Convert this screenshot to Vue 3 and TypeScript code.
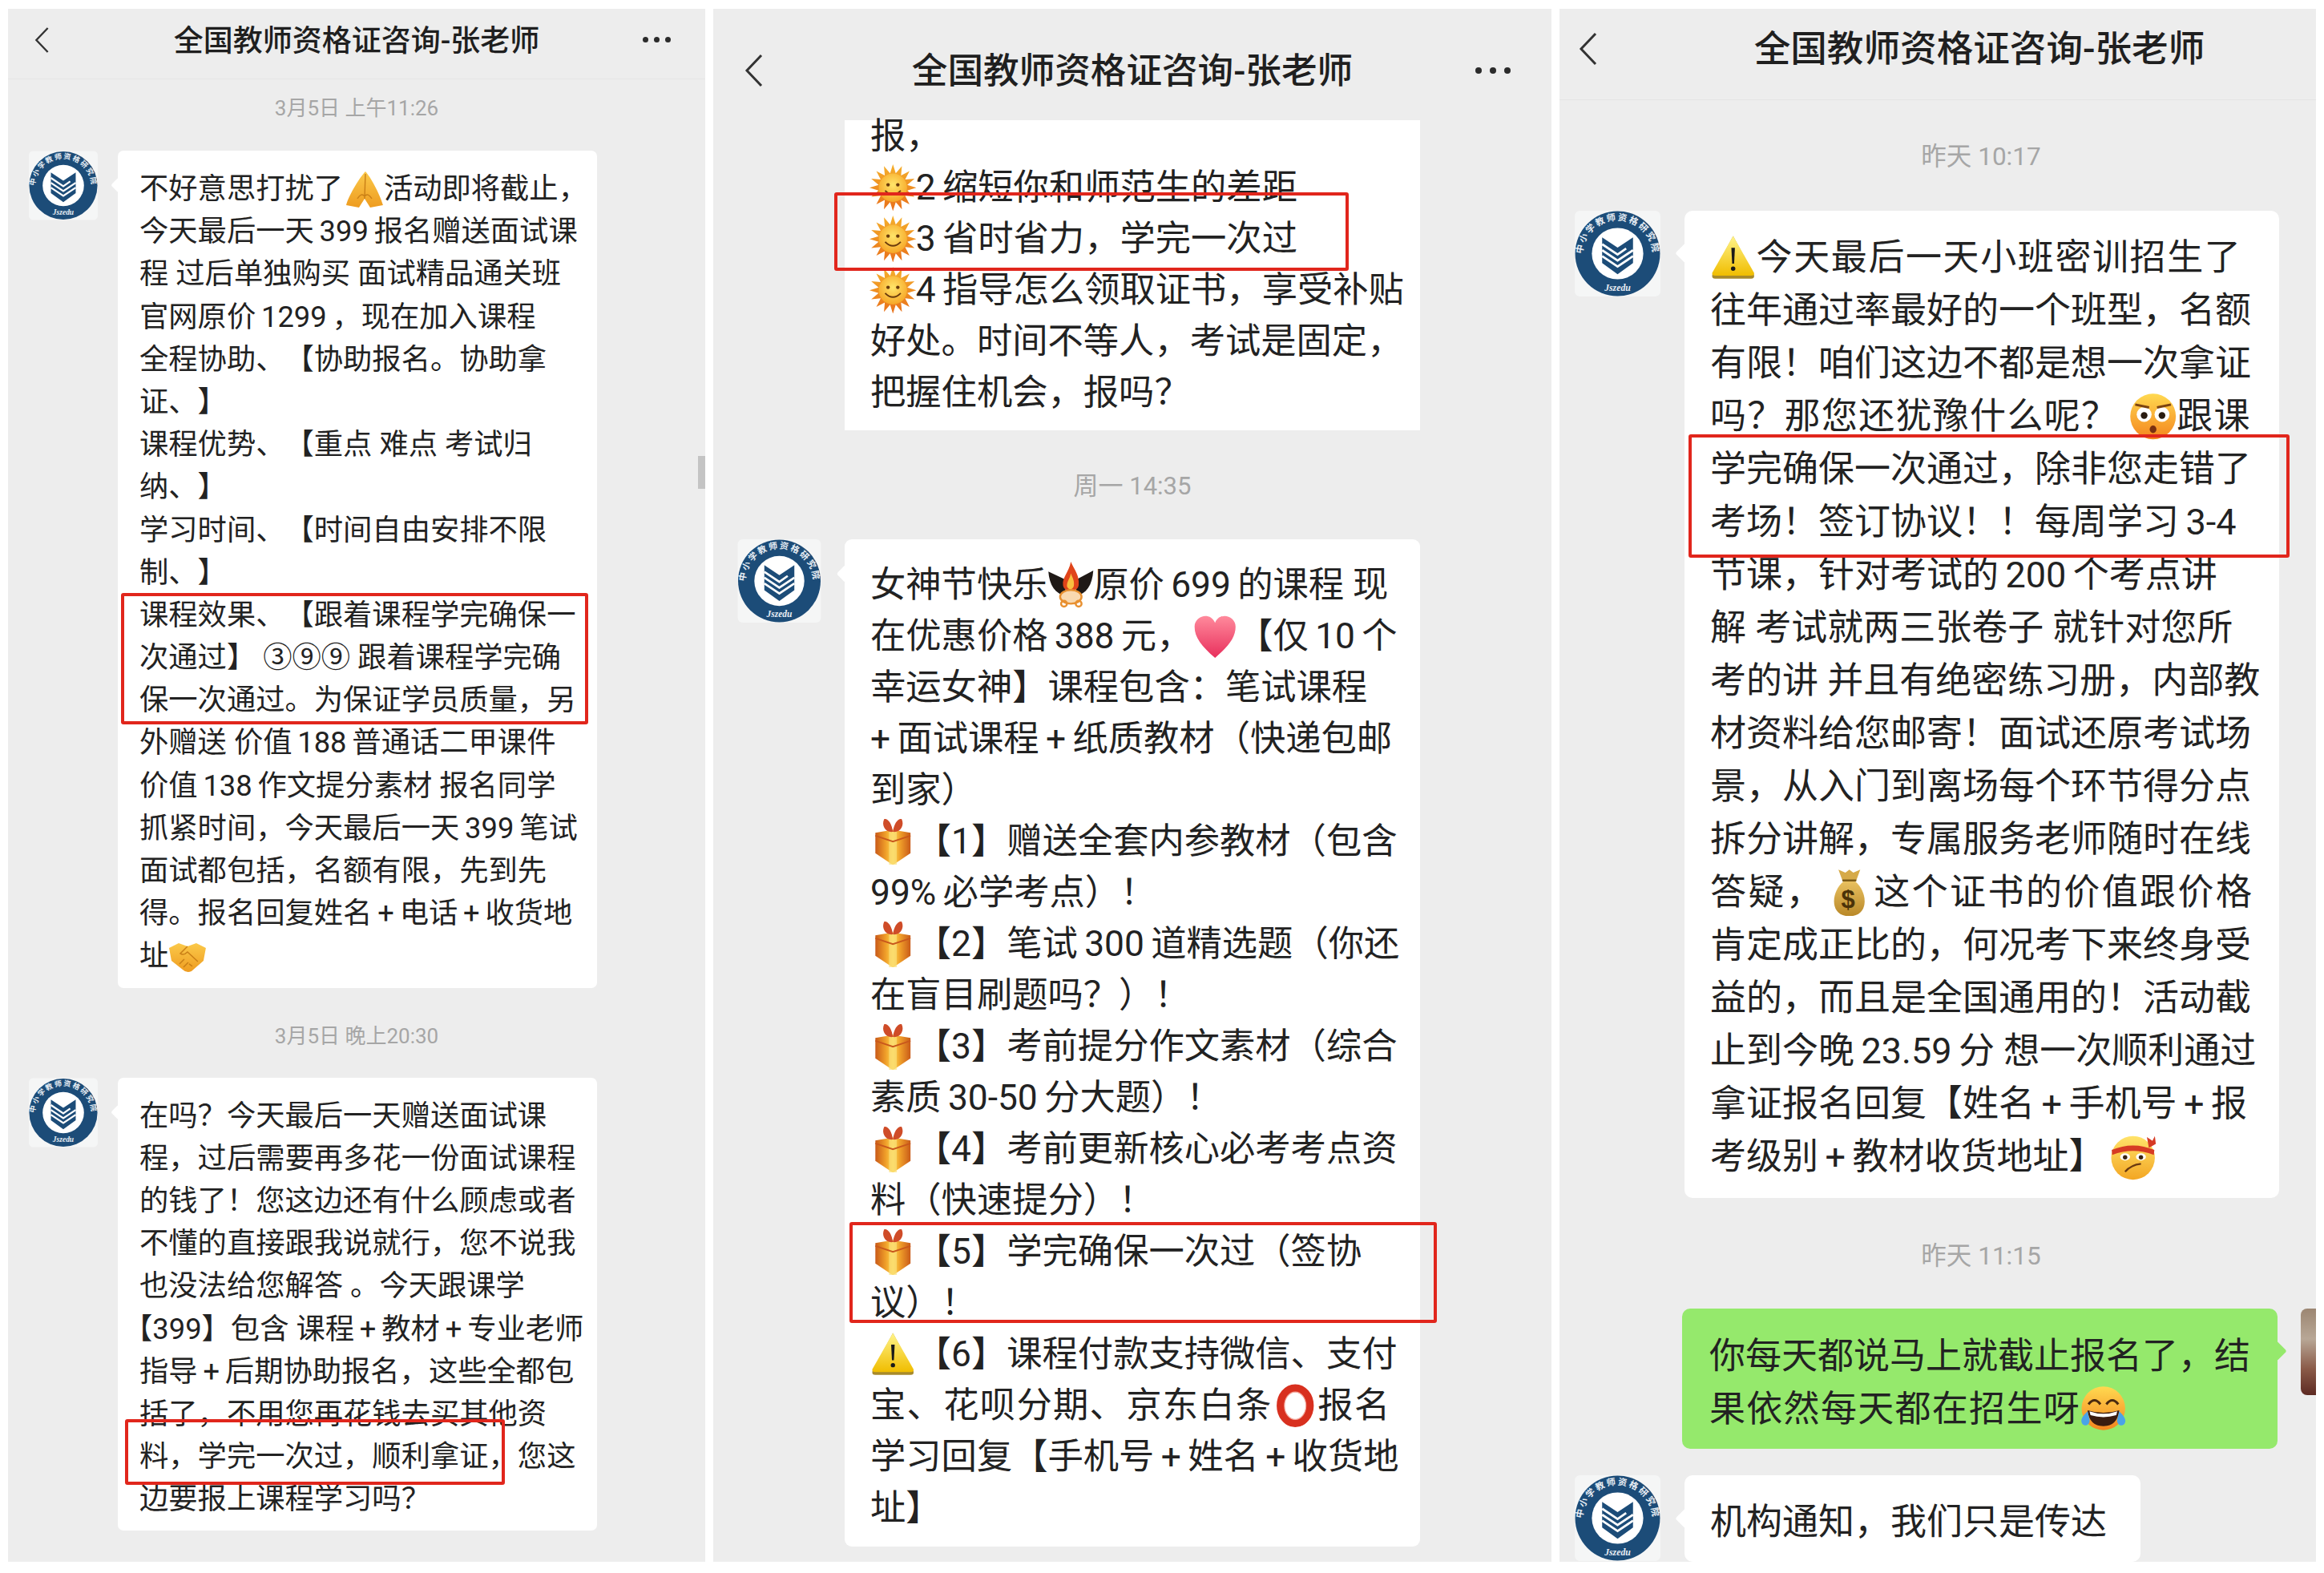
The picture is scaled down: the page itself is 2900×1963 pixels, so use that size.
<template>
  <div class="page">
    <!-- emoji and avatar art, shared through <use> -->
    <svg class="defs" aria-hidden="true">
      <defs>
        <linearGradient id="g-sun" x1="0" y1="0" x2="0" y2="1">
          <stop offset="0" stop-color="#f5b02c" />
          <stop offset="1" stop-color="#e8701a" />
        </linearGradient>
        <radialGradient id="g-sunface" cx="0.5" cy="0.4" r="0.7">
          <stop offset="0" stop-color="#ffe56a" />
          <stop offset="1" stop-color="#f59c1c" />
        </radialGradient>
        <linearGradient id="g-gift" x1="0" y1="0" x2="1" y2="0">
          <stop offset="0" stop-color="#c95a18" />
          <stop offset="0.3" stop-color="#f0a02a" />
          <stop offset="0.5" stop-color="#fcd84f" />
          <stop offset="0.7" stop-color="#f0a02a" />
          <stop offset="1" stop-color="#c95a18" />
        </linearGradient>
        <linearGradient id="g-warn" x1="0" y1="0" x2="0" y2="1">
          <stop offset="0" stop-color="#fff48a" />
          <stop offset="1" stop-color="#f0bd00" />
        </linearGradient>
        <linearGradient id="g-heart" x1="0" y1="0" x2="0" y2="1">
          <stop offset="0" stop-color="#ff8a9c" />
          <stop offset="1" stop-color="#e82f5c" />
        </linearGradient>
        <linearGradient id="g-bag" x1="0" y1="0" x2="0" y2="1">
          <stop offset="0" stop-color="#e8c060" />
          <stop offset="1" stop-color="#b98828" />
        </linearGradient>
        <linearGradient id="g-face" x1="0" y1="0" x2="0" y2="1">
          <stop offset="0" stop-color="#ffd950" />
          <stop offset="1" stop-color="#f4851e" />
        </linearGradient>
        <linearGradient id="g-band" x1="0" y1="0" x2="0" y2="1">
          <stop offset="0" stop-color="#ffe36a" />
          <stop offset="1" stop-color="#f3a623" />
        </linearGradient>
        <linearGradient id="g-arm" x1="0" y1="0" x2="0" y2="1">
          <stop offset="0" stop-color="#fbc94a" />
          <stop offset="1" stop-color="#ee9c20" />
        </linearGradient>
        <path id="ring-arc" d="M13 70 A41 41 0 1 1 87 70" />

        <symbol id="e-sun" viewBox="0 0 48 48">
          <polygon :points="sunRays" fill="url(#g-sun)" />
          <circle cx="24" cy="24" r="14.5" fill="url(#g-sunface)" />
          <circle cx="19" cy="21" r="1.8" fill="#6b3b0c" />
          <circle cx="29" cy="21" r="1.8" fill="#6b3b0c" />
          <path d="M16 27 Q24 35 32 27" fill="none" stroke="#6b3b0c" stroke-width="1.6" />
        </symbol>
        <symbol id="e-gift" viewBox="0 0 48 48">
          <path d="M6 15 L24 12 L42 15 V36 L24 48 L6 36 Z" fill="url(#g-gift)" />
          <path d="M20 12 H28 V48 H20 Z" fill="#fbe07a" opacity="0.7" />
          <path d="M6 18 L24 24 L42 18" fill="none" stroke="#c9581c" stroke-width="1.5" />
          <path d="M24 14 C16 15 12 7 15 1 C19 0 23 6 24 14 C25 6 29 0 33 1 C36 7 32 15 24 14 Z" fill="#cf4c28" />
        </symbol>
        <symbol id="e-warn" viewBox="0 0 48 48">
          <path d="M24 2 L45 41 Q46 45 42 45 H6 Q2 45 3 41 Z" fill="#a88a2a" />
          <path d="M24 2 L45 39 Q46 42 42 42 H6 Q2 42 3 39 Z" fill="url(#g-warn)" />
          <path d="M22.2 14 H25.8 L25 30 H23 Z" fill="#1a1a1a" />
          <circle cx="24" cy="35" r="2.2" fill="#1a1a1a" />
        </symbol>
        <symbol id="e-heart" viewBox="0 0 48 48">
          <path d="M24 46 C10 34 3 25 3 14 C3 7 9 3 14 3 C18 3 22 5 24 10 C26 5 30 3 34 3 C39 3 45 7 45 14 C45 25 38 34 24 46 Z" fill="url(#g-heart)" />
        </symbol>
        <symbol id="e-ring" viewBox="0 0 48 48">
          <ellipse cx="24" cy="24" rx="15" ry="18" fill="none" stroke="#d8301f" stroke-width="8" />
          <ellipse cx="24" cy="24" rx="11" ry="14" fill="none" stroke="#f3a79c" stroke-width="1" />
        </symbol>
        <symbol id="e-pray" viewBox="0 0 48 48">
          <path d="M25 2 C19 8 5 30 1 44 L17 47 L24 36 L31 47 L47 44 C43 30 31 8 25 2 Z" fill="url(#g-arm)" />
          <path d="M25 5 L24 36 M15 36 Q20 28 24 33 M33 36 Q28 28 24 33" fill="none" stroke="#c97f16" stroke-width="1.4" />
        </symbol>
        <symbol id="e-shake" viewBox="0 0 48 48">
          <path d="M1 14 L13 8 L24 12 L35 8 L47 14 L44 30 L29 43 Q23 46 18 41 L4 30 Z" fill="url(#g-arm)" />
          <path d="M24 12 L15 21 Q19 24 24 19 L37 31 M19 38 L25 32 M14 34 L20 28 M30 37 L26 34" fill="none" stroke="#c97f16" stroke-width="1.5" />
        </symbol>
        <symbol id="e-fire" viewBox="0 0 48 48">
          <path d="M1 10 C2 24 8 33 19 35 L18 18 Z M47 9 C46 24 40 33 29 35 L30 18 Z" fill="#1f1916" />
          <path d="M24 0 C28 9 33 14 32 24 C31 32 17 32 16 24 C15 16 22 11 24 0 Z" fill="#e0441a" />
          <path d="M24 12 C26 17 28 20 27 25 C26 29 21 29 20 25 C20 20 23 18 24 12 Z" fill="#f9c040" />
          <ellipse cx="24" cy="36" rx="11" ry="7" fill="#f9d9b0" stroke="#e89030" stroke-width="2" />
          <circle cx="17" cy="43" r="3" fill="none" stroke="#e89030" stroke-width="2" />
          <circle cx="32" cy="43" r="3" fill="none" stroke="#e89030" stroke-width="2" />
        </symbol>
        <symbol id="e-bag" viewBox="0 0 48 48">
          <path d="M17 12 L13 1 L20 4 L24 1 L28 4 L35 1 L31 12 Z" fill="#d6aa48" />
          <path d="M17 12 H31" stroke="#7a5a18" stroke-width="2" />
          <path d="M18 13 C5 24 4 48 24 48 C44 48 43 24 30 13 Z" fill="url(#g-bag)" />
          <text x="24" y="40" class="bag-sign" text-anchor="middle">$</text>
        </symbol>
        <symbol id="e-flush" viewBox="0 0 48 48">
          <circle cx="24" cy="24" r="23" fill="url(#g-face)" />
          <circle cx="15" cy="22" r="7.5" fill="#fff" />
          <circle cx="33" cy="22" r="7.5" fill="#fff" />
          <circle cx="15" cy="23" r="3.4" fill="#2a1c10" />
          <circle cx="33" cy="23" r="3.4" fill="#2a1c10" />
          <path d="M6 12 L20 15 M42 12 L28 15" stroke="#7a4210" stroke-width="2.4" />
          <ellipse cx="24" cy="37" rx="3.4" ry="3.8" fill="#7a3010" />
        </symbol>
        <symbol id="e-band" viewBox="0 0 48 48">
          <circle cx="24" cy="25" r="22" fill="url(#g-band)" />
          <path d="M2.500 17 Q24 8 45.500 17 L45 22 Q24 14 3 22 Z" fill="#d63a24" />
          <path d="M40 15 L46 3 L47 11 Z M40 15 L38 4 L44 8 Z" fill="#d63a24" />
          <ellipse cx="16" cy="24" rx="5" ry="3.600" fill="#fff" />
          <ellipse cx="32" cy="24" rx="5" ry="3.600" fill="#fff" />
          <circle cx="16" cy="24.500" r="2.200" fill="#3a2412" />
          <circle cx="32" cy="24.500" r="2.200" fill="#3a2412" />
          <path d="M16 39 Q22 32 32 31" fill="none" stroke="#6b3a10" stroke-width="1.800" />
        </symbol>
        <symbol id="e-joy" viewBox="0 0 48 48">
          <circle cx="24" cy="23" r="22" fill="url(#g-face)" />
          <path d="M9 19 Q15 11 21 19 M27 19 Q33 11 39 19" fill="none" stroke="#4a2a10" stroke-width="2.400" />
          <path d="M8 25 Q24 30 40 25 Q38 41 24 41 Q10 41 8 25 Z" fill="#3a1c10" />
          <path d="M10 26 Q24 31 38 26 L37 30 Q24 34 11 30 Z" fill="#fff" />
          <path d="M8 26 C3 31 0 35 3 39 C6 42 11 39 10 34 Z M40 26 C45 31 48 35 45 39 C42 42 37 39 38 34 Z" fill="#4aa3e8" />
        </symbol>
        <symbol id="avatar" viewBox="0 0 100 100">
          <rect width="100" height="100" rx="6" fill="#f5f6f6" />
          <circle cx="50" cy="50" r="49.500" fill="#1c4c78" />
          <circle cx="50" cy="50" r="30" fill="#fff" />
          <path d="M32 31 L50 43 L68 31 V61 L50 74 L32 61 Z" fill="#1c4c78" />
          <path d="M32 39 L50 51 L60 44 M32 46 L50 58 L68 46 M32 53 L50 65 L68 53" fill="none" stroke="#fff" stroke-width="2.600" />
          <text class="ring-text"><textPath href="#ring-arc" startOffset="50%" text-anchor="middle">中小学教师资格研究院</textPath></text>
          <text x="50" y="93" class="ring-latin" text-anchor="middle">Jszedu</text>
        </symbol>
      </defs>
    </svg>

    <section v-for="panel in panels" :key="panel.id" class="panel" :class="panel.id">
      <div class="screen">
        <header class="header">
          <svg class="back" viewBox="0 0 24 42">
            <polyline points="21,2 3,21 21,40" />
          </svg>
          <h1 class="title">全国教师资格证咨询-张老师</h1>
          <div class="dots"><i></i><i></i><i></i></div>
        </header>

        <template v-for="(item, i) in panel.items" :key="i">
          <div v-if="item.time" class="time" :class="{ first: i === 0 }">{{ item.time }}</div>
          <div v-else class="row" :class="[item.side, item.variant]">
            <svg v-if="item.side === 'left' && item.variant !== 'cut'" class="avatar"><use href="#avatar" /></svg>
            <div class="bubble">
              <div class="lines">
                <div v-for="(segs, n) in item.lines" :key="n" class="line" :class="lineClass(segs)">
                  <template v-for="(seg, m) in segs" :key="m">
                    <svg v-if="seg.emoji" class="emoji" :class="seg.emoji"><use :href="'#e-' + seg.emoji" /></svg>
                    <span v-else :class="{ latin: seg.latin }">{{ seg.text }}</span>
                  </template>
                </div>
              </div>
              <div v-if="item.mark" class="mark" :class="item.mark"></div>
            </div>
            <div v-if="item.side === 'right'" class="me"></div>
          </div>
        </template>
      </div>
      <div v-if="panel.id === 'one'" class="scrollbar"></div>
    </section>
  </div>
</template>

<script setup lang="ts">
interface Seg {
  emoji?: string
  text?: string
  latin?: boolean
}

interface Item {
  time?: string
  side?: 'left' | 'right'
  variant?: string
  mark?: string
  lines?: Seg[][]
}

interface Panel {
  id: string
  items: Item[]
}

// one text line per source line, :name: puts an emoji there.
// digits and plus signs keep narrower spaces than the chinese text
function parse(text: string): Seg[][] {
  return text.trim().split('\n').map((line) => {
    const segs: Seg[] = []
    for (const part of line.split(/(:[a-z]+:)/).filter(Boolean)) {
      if (/^:[a-z]+:$/.test(part)) {
        segs.push({ emoji: part.slice(1, -1) })
        continue
      }
      for (const run of part.split(/( ?[0-9+][0-9+.%-]* ?)/).filter(Boolean)) {
        segs.push({ text: run, latin: /[0-9+]/.test(run) })
      }
    }
    return segs
  })
}

// some lines with an emoji run a little wider in the screenshot
function lineClass(segs: Seg[]) {
  const has = (name: string) => segs.some((s) => s.emoji === name)
  return {
    hang: segs[0].text?.startsWith('【'),
    wide: has('bag'),
    snug: has('ring') || has('flush') || has('joy'),
    'has-warn': has('warn'),
  }
}

function msg(text: string, opts: Partial<Item> = {}): Item {
  return { side: 'left', lines: parse(text), ...opts }
}

const sunRays = Array.from({ length: 32 }, (_, i) => {
  const r = i % 2 === 0 ? 24 : 15
  const a = (i * Math.PI) / 16 - Math.PI / 2
  return `${(24 + r * Math.cos(a)).toFixed(1)},${(24 + r * Math.sin(a)).toFixed(1)}`
}).join(' ')

const panels: Panel[] = [
  {
    id: 'one',
    items: [
      { time: '3月5日 上午11:26' },
      msg(`不好意思打扰了:pray:活动即将截止，
今天最后一天 399 报名赠送面试课
程 过后单独购买 面试精品通关班
官网原价 1299 ，现在加入课程
全程协助、【协助报名。协助拿
证、】
课程优势、【重点 难点 考试归
纳、】
学习时间、【时间自由安排不限
制、】
课程效果、【跟着课程学完确保一
次通过】 ③⑨⑨ 跟着课程学完确
保一次通过。为保证学员质量，另
外赠送 价值 188 普通话二甲课件
价值 138 作文提分素材 报名同学
抓紧时间，今天最后一天 399 笔试
面试都包括，名额有限，先到先
得。报名回复姓名 + 电话 + 收货地
址:shake:`, { mark: 'mark-a' }),
      { time: '3月5日 晚上20:30' },
      msg(`在吗？今天最后一天赠送面试课
程，过后需要再多花一份面试课程
的钱了！您这边还有什么顾虑或者
不懂的直接跟我说就行，您不说我
也没法给您解答 。今天跟课学
【399】包含 课程 + 教材 + 专业老师
指导 + 后期协助报名，这些全都包
括了，不用您再花钱去买其他资
料，学完一次过，顺利拿证，您这
边要报上课程学习吗？`, { mark: 'mark-b' }),
    ],
  },
  {
    id: 'two',
    items: [
      msg(`报，
:sun:2 缩短你和师范生的差距
:sun:3 省时省力，学完一次过
:sun:4 指导怎么领取证书，享受补贴
好处。时间不等人，考试是固定，
把握住机会，报吗？`, { variant: 'cut', mark: 'mark-c' }),
      { time: '周一 14:35' },
      msg(`女神节快乐:fire:原价 699 的课程 现
在优惠价格 388 元，:heart:【仅 10 个
幸运女神】课程包含：笔试课程
+ 面试课程 + 纸质教材（快递包邮
到家）
:gift:【1】赠送全套内参教材（包含
99% 必学考点）！
:gift:【2】笔试 300 道精选题（你还
在盲目刷题吗？）！
:gift:【3】考前提分作文素材（综合
素质 30-50 分大题）！
:gift:【4】考前更新核心必考考点资
料（快速提分）！
:gift:【5】学完确保一次过（签协
议）！
:warn:【6】课程付款支持微信、支付
宝、花呗分期、京东白条:ring:报名
学习回复【手机号 + 姓名 + 收货地
址】`, { mark: 'mark-d' }),
    ],
  },
  {
    id: 'three',
    items: [
      { time: '昨天 10:17' },
      msg(`:warn:今天最后一天小班密训招生了
往年通过率最好的一个班型，名额
有限！咱们这边不都是想一次拿证
吗？那您还犹豫什么呢？:flush:跟课
学完确保一次通过，除非您走错了
考场！签订协议！！每周学习 3-4
节课，针对考试的 200 个考点讲
解 考试就两三张卷子 就针对您所
考的讲 并且有绝密练习册，内部教
材资料给您邮寄！面试还原考试场
景，从入门到离场每个环节得分点
拆分讲解，专属服务老师随时在线
答疑，:bag:这个证书的价值跟价格
肯定成正比的，何况考下来终身受
益的，而且是全国通用的！活动截
止到今晚 23.59 分 想一次顺利通过
拿证报名回复【姓名 + 手机号 + 报
考级别 + 教材收货地址】:band:`, { mark: 'mark-e' }),
      { time: '昨天 11:15' },
      msg(`你每天都说马上就截止报名了，结
果依然每天都在招生呀:joy:`, { side: 'right' }),
      msg('机构通知，我们只是传达', { variant: 'short' }),
    ],
  },
]
</script>

<style>
html,
body {
  margin: 0;
  background: #fff;
}
</style>

<style scoped>
.page {
  display: flex;
  gap: 10px;
  box-sizing: border-box;
  width: 2900px;
  height: 1963px;
  padding: 11px 10px 14px;
  background: #fff;
  font-family: Roboto, 'Noto Sans CJK SC', sans-serif;
  color: #222;
  text-spacing-trim: space-all;
}

.defs {
  position: absolute;
  width: 0;
  height: 0;
}

.bag-sign {
  font: 700 25px 'Liberation Sans', sans-serif;
  fill: #4a3208;
}

.ring-text {
  font: 700 10.5px 'Noto Sans CJK SC', sans-serif;
  letter-spacing: 2px;
  fill: #e8eef4;
}

.ring-latin {
  font: italic 700 11px 'Liberation Serif', serif;
  fill: #e8eef4;
}

.panel {
  position: relative;
  overflow: hidden;
  background: #ededed;
}

.screen {
  display: flex;
  flex-direction: column;
  height: 100%;
}

.one { width: 870px; --fs: 36.3px; --lh: 53.2px; --title: 37px; --time: 26px; --radius: 7px; }
.two { width: 1046px; --fs: 44.3px; --lh: 64px; --title: 44.6px; --time: 31px; --radius: 9px; }
.three { width: 944px; --fs: 45px; --lh: 66px; --title: 45.6px; --time: 31.5px; --radius: 10px; }

.three .screen {
  width: 1052px;
}

.header {
  display: grid;
  grid-template-columns: 1fr auto 1fr;
  align-items: center;
  box-sizing: border-box;
  flex: none;
}

.one .header { height: 88px; padding: 0 33px 10px; border-bottom: 1px solid #e6e6e6; }
.two .header { height: 139px; padding: 15px 39px 0; }
.three .header { height: 114px; padding: 0 28px 14px 24px; border-bottom: 1px solid #e4e4e4; }

.back {
  fill: none;
  stroke: #333;
  stroke-width: 3;
  width: 24px;
  height: 42px;
}

.one .back { width: 19px; height: 34px; }
.three .back { height: 44px; }

.title {
  margin: 0;
  padding-top: 4px;
  font-size: var(--title);
  font-weight: 500;
  line-height: 1.2;
  color: #1f1f1f;
  white-space: nowrap;
}

.one .title { padding-top: 6px; }

.dots {
  display: flex;
  justify-content: flex-end;
  gap: 7px;
  margin-right: 10px;
}

.dots i {
  width: 7px;
  height: 7px;
  border-radius: 50%;
  background: #2b2b2b;
}

.two .dots { gap: 10px; margin-right: 12px; }
.two .dots i { width: 8px; height: 8px; }

.time {
  flex: none;
  margin: 44px 0 36px;
  font-size: var(--time);
  line-height: 32px;
  text-align: center;
  color: #a6a6a6;
}

.time.first { margin: 20px 0 37px; }
.two .time { margin: 52px 0 48px; line-height: 36px; }
.three .time { margin: 55px 0 47px; line-height: 36px; }
.three .time.first { margin: 53px 0 49px; }

.row {
  display: flex;
  align-items: flex-start;
  flex: none;
  gap: 25px;
  padding: 0 0 0 26px;
}

.two .row { gap: 29px; padding-left: 30px; }
.three .row { gap: 30px; padding-left: 19px; }
.two .row.cut { padding-left: 164px; }
.three .row.right { justify-content: flex-end; gap: 29px; padding: 0 20px 0 0; }
.three .row.short { margin-top: 33px; }

.avatar {
  flex: none;
  width: 86px;
  height: 87px;
}

.two .avatar { width: 105px; height: 104px; }
.three .avatar { width: 107px; height: 107px; }

.me {
  flex: none;
  width: 107px;
  height: 108px;
  border-radius: 8px;
  background: linear-gradient(180deg, #9c8672 0%, #b8a796 35%, #8a5a48 70%, #5d2a22 100%);
}

.bubble {
  position: relative;
  box-sizing: border-box;
  flex: none;
  border-radius: var(--radius);
  background: #fff;
}

.one .bubble { width: 598px; padding: 21px 0 13px 27px; }
.two .bubble { width: 718px; padding: 25px 0 16px 32px; }
.three .bubble { width: 742px; padding: 26px 0 18px 32px; }
.two .cut .bubble { padding-top: 0; padding-bottom: 15px; border-radius: 0; }
.two .cut .lines { margin-top: -12px; }
.three .right .bubble { width: 743px; height: 175px; padding: 27px 0 0 34px; background: #95e96c; }
.three .short .bubble { width: 569px; height: 108px; padding-top: 26px; }

.bubble::before {
  content: '';
  position: absolute;
  top: 36px;
  left: -6px;
  width: 14px;
  height: 14px;
  border-radius: 3px;
  background: inherit;
  transform: rotate(45deg);
}

.two .bubble::before { left: -7px; top: 35px; width: 16px; height: 16px; }
.three .bubble::before { left: -8px; top: 44px; width: 18px; height: 18px; }
.three .short .bubble::before { top: 45px; }
.three .right .bubble::before { left: auto; right: -8px; }
.two .cut .bubble::before { display: none; }

.line {
  height: var(--lh);
  font-size: var(--fs);
  line-height: var(--lh);
  white-space: pre;
}

.line.hang { margin-left: -0.55em; }
.line.wide { letter-spacing: 2.4px; }
.line.snug { letter-spacing: 1.3px; }
.three .line.has-warn { letter-spacing: 1.6px; }

.latin {
  word-spacing: -0.06em;
}

.emoji {
  width: 1.32em;
  height: 1.32em;
  margin: 0 -0.02em 0 -0.02em;
  vertical-align: -0.32em;
}

.emoji.bag { margin: 0 0.03em; }
.emoji.pray { margin: 0 0 0 0.08em; }
.emoji.flush { margin: 0 0 0 0.3em; }
.emoji.band { margin-left: 0.12em; }

.mark {
  position: absolute;
  box-sizing: border-box;
  border: 4px solid #e1261c;
  border-radius: 3px;
}

.mark-a { left: 4px; top: 552px; width: 583px; height: 164px; }
.mark-b { left: 9px; top: 426px; width: 474px; height: 82px; }
.mark-c { left: -13px; top: 90px; width: 642px; height: 98px; }
.mark-d { left: 6px; top: 852px; width: 733px; height: 126px; }
.mark-e { left: 5px; top: 279px; width: 750px; height: 154px; }

.scrollbar {
  position: absolute;
  top: 558px;
  right: 0;
  width: 9px;
  height: 41px;
  background: #c4c4c4;
}
</style>
